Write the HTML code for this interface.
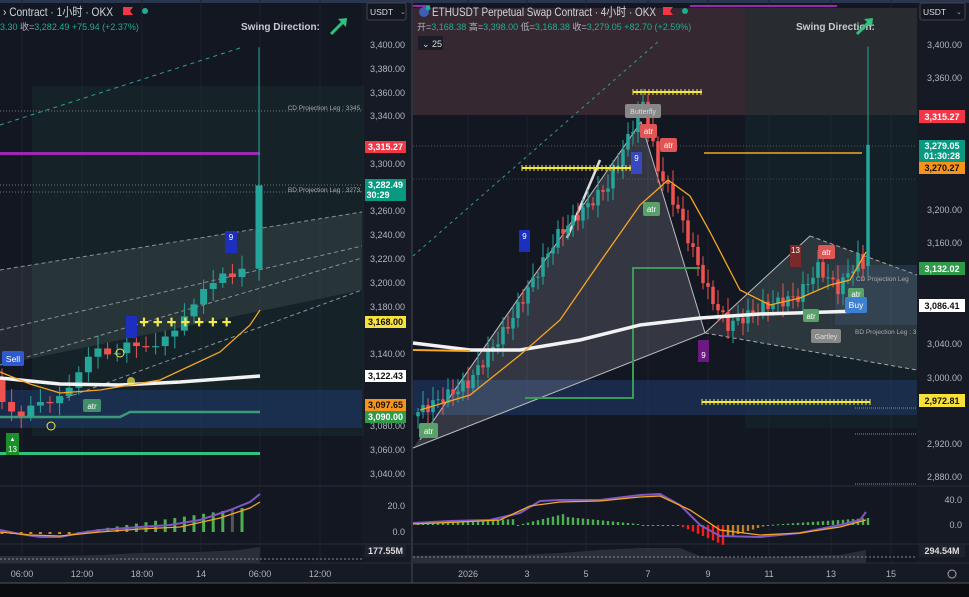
<!DOCTYPE html>
<html><head><meta charset="utf-8">
<style>
html,body{margin:0;padding:0;background:#0b0c10;}
svg{display:block;font-family:"Liberation Sans","Noto Sans CJK SC",sans-serif;}
</style></head><body>
<svg id="s" width="969" height="597" viewBox="0 0 969 597" xmlns="http://www.w3.org/2000/svg">
<rect width="969" height="597" fill="#0b0c10"/>
<rect x="0" y="0" width="411" height="583" fill="#161a25"/>
<rect x="0" y="0" width="362" height="563" fill="#131722"/>
<rect x="413" y="0" width="556" height="583" fill="#161a25"/>
<rect x="413" y="0" width="504" height="563" fill="#131722"/>
<rect x="0" y="0" width="969" height="3" fill="#2a3550"/>
<line x1="412" y1="0" x2="412" y2="583" stroke="#3a3e4a" stroke-width="1.5"/>
<g stroke="#1e2230" stroke-width="1">
<line x1="22" y1="0" x2="22" y2="563"/><line x1="82" y1="0" x2="82" y2="563"/><line x1="142" y1="0" x2="142" y2="563"/><line x1="201" y1="0" x2="201" y2="563"/><line x1="260" y1="0" x2="260" y2="563"/><line x1="320" y1="0" x2="320" y2="563"/>
<line x1="468" y1="0" x2="468" y2="563"/><line x1="527" y1="0" x2="527" y2="563"/><line x1="586" y1="0" x2="586" y2="563"/><line x1="648" y1="0" x2="648" y2="563"/><line x1="708" y1="0" x2="708" y2="563"/><line x1="769" y1="0" x2="769" y2="563"/><line x1="831" y1="0" x2="831" y2="563"/><line x1="891" y1="0" x2="891" y2="563"/>
</g>
<rect x="32" y="86" width="332" height="350" fill="#1b3a34" opacity="0.35"/>
<rect x="0" y="390" width="362" height="38" fill="#1f3a6b" opacity="0.55"/>
<polygon points="0,270 362,212 362,290 0,365" fill="#ffffff" opacity="0.08"/>
<g stroke="#8a8f9a" stroke-width="1" stroke-dasharray="4,3" fill="none">
<line x1="0" y1="270" x2="362" y2="212"/><line x1="0" y1="330" x2="362" y2="246"/><line x1="0" y1="365" x2="362" y2="258"/><line x1="60" y1="400" x2="362" y2="290"/>
</g>
<line x1="0" y1="125" x2="240" y2="48" stroke="#2aa38a" stroke-width="1" stroke-dasharray="4,4"/>
<line x1="0" y1="111" x2="362" y2="111" stroke="#777" stroke-dasharray="1,2"/>
<line x1="0" y1="185" x2="362" y2="185" stroke="#777" stroke-dasharray="1,2"/>
<line x1="0" y1="192" x2="362" y2="192" stroke="#777" stroke-dasharray="1,2"/>
<text x="362" y="110" font-size="6.5" fill="#aaa" text-anchor="end">CD Projection Leg : 3345.</text>
<text x="362" y="192" font-size="6.5" fill="#aaa" text-anchor="end">BD Projection Leg : 3273.</text>
<rect x="0" y="152" width="260" height="3" fill="#9c27b0"/>
<polyline points="0,417 120,417 130,412 260,412" stroke="#3a9a7a" stroke-width="2.5" fill="none"/>
<rect x="0" y="452" width="260" height="3" fill="#2ec27e"/>
<rect x="413" y="8" width="504" height="107" fill="#3a2a33" opacity="0.9"/>
<rect x="745" y="8" width="172" height="420" fill="#16302f" opacity="0.4"/>
<rect x="413" y="380" width="504" height="35" fill="#1f3a6b" opacity="0.55"/>
<line x1="690" y1="6" x2="837" y2="6" stroke="#9c27b0" stroke-width="2"/>
<line x1="413" y1="6" x2="430" y2="6" stroke="#9c27b0" stroke-width="2"/>
<line x1="413" y1="146" x2="917" y2="146" stroke="#555" stroke-dasharray="1,2"/>
<line x1="413" y1="179" x2="917" y2="179" stroke="#444" stroke-dasharray="1,2"/>
<line x1="413" y1="256" x2="660" y2="40" stroke="#2aa38a" stroke-dasharray="3,4"/>
<polygon points="413,448 641,122 705,333" fill="#ffffff" opacity="0.14"/>
<polyline points="420,440 641,122 705,333 413,448" stroke="#bbb" fill="none" stroke-width="1"/>
<polygon points="705,333 810,236 917,275 917,370" fill="#ffffff" opacity="0.10"/>
<polyline points="705,333 810,236" stroke="#bbb" fill="none"/>
<g stroke="#aaa" stroke-dasharray="4,3" fill="none"><line x1="810" y1="236" x2="917" y2="275"/><line x1="705" y1="333" x2="917" y2="370"/></g>
<rect x="835" y="265" width="82" height="60" fill="#5577aa" opacity="0.2"/>
<line x1="567" y1="238" x2="600" y2="160" stroke="#ddd" stroke-width="2.5"/>
<polyline points="525,398 633,398 633,268 700,268" stroke="#3a9a5a" stroke-width="2" fill="none"/>
<line x1="704" y1="153" x2="862" y2="153" stroke="#f5a623" stroke-width="1.5"/>
<line x1="855" y1="408" x2="917" y2="408" stroke="#888" stroke-dasharray="1,1"/>
<line x1="855" y1="434" x2="917" y2="434" stroke="#888" stroke-dasharray="1,1"/>
<line x1="855" y1="484" x2="917" y2="484" stroke="#888" stroke-dasharray="1,1"/>
<g id="cand"></g>
<polyline points="0,378 60,384 120,385 180,382 260,376" stroke="#f2f2f2" stroke-width="3.5" fill="none"/>
<polyline points="0,372 30,384 60,393 100,390 160,380 220,352 250,325 260,310" stroke="#f5a623" stroke-width="1.3" fill="none"/>
<polyline points="413,343 470,350 520,350 580,340 640,325 700,318 760,314 860,311" stroke="#f2f2f2" stroke-width="3.5" fill="none"/>
<polyline points="413,350 470,351" stroke="#f5a623" stroke-width="2" fill="none"/>
<polyline points="420,410 470,395 520,355 560,320 600,262 640,205 668,180 690,196 710,232 740,290 770,305 800,298 830,285 850,280 866,252" stroke="#f5a623" stroke-width="1.3" fill="none"/>
<g fill="#f4e94a" font-size="10" font-weight="bold">
<text x="139" y="326" letter-spacing="0.5">✚ ✚ ✚ ✚ ✚ ✚ ✚</text>
</g>
<g stroke="#f4e94a" stroke-width="2"><line x1="522" y1="168" x2="640" y2="168"/><line x1="633" y1="92" x2="702" y2="92"/><line x1="702" y1="402" x2="870" y2="402"/></g>
<g stroke="#f4e94a" stroke-width="1" id="ticks"></g>
<rect x="2" y="351" width="22" height="15" rx="2" fill="#2f5bd0"/><text x="13" y="362" font-size="8.5" fill="#fff" text-anchor="middle">Sell</text>
<rect x="6" y="433" width="13" height="22" fill="#1a8f2a"/><text x="12.5" y="452" font-size="8" fill="#fff" text-anchor="middle">13</text><text x="12.5" y="441" font-size="6" fill="#fff" text-anchor="middle">▲</text>
<rect x="83" y="399" width="18" height="13" rx="2" fill="#3e8f6a"/><text x="92" y="409" font-size="8" fill="#fff" text-anchor="middle">atr</text>
<rect x="225" y="231" width="12" height="22" fill="#1d2fbf"/><text x="231" y="240" font-size="8" fill="#fff" text-anchor="middle">9</text>
<rect x="126" y="316" width="11" height="22" fill="#1d2fbf"/>
<circle cx="120" cy="353" r="4" fill="none" stroke="#f4e94a"/><circle cx="131" cy="381" r="4" fill="#f4e94a" opacity="0.7"/><circle cx="51" cy="426" r="4" fill="none" stroke="#f4e94a"/>
<rect x="519" y="230" width="11" height="22" fill="#1d2fbf"/><text x="524.5" y="239" font-size="8" fill="#fff" text-anchor="middle">9</text>
<rect x="631" y="152" width="11" height="22" fill="#3a48c0"/><text x="636.5" y="161" font-size="8" fill="#fff" text-anchor="middle">9</text>
<rect x="625" y="104" width="36" height="14" rx="2" fill="#888"/><text x="643" y="114" font-size="7" fill="#ddd" text-anchor="middle">Butterfly</text>
<rect x="640" y="124" width="17" height="14" rx="2" fill="#e05555"/><text x="648.5" y="134" font-size="8" fill="#fff" text-anchor="middle">atr</text>
<rect x="660" y="138" width="17" height="14" rx="2" fill="#e05555"/><text x="668.5" y="148" font-size="8" fill="#fff" text-anchor="middle">atr</text>
<rect x="643" y="202" width="17" height="14" rx="2" fill="#5aa06a"/><text x="651.5" y="212" font-size="8" fill="#fff" text-anchor="middle">atr</text>
<rect x="419" y="423" width="19" height="15" rx="2" fill="#5aa06a"/><text x="428.5" y="434" font-size="8" fill="#fff" text-anchor="middle">atr</text>
<rect x="698" y="340" width="11" height="22" fill="#6a1a80"/><text x="703.5" y="358" font-size="8" fill="#fff" text-anchor="middle">9</text>
<rect x="790" y="245" width="11" height="22" fill="#7a2a2a"/><text x="795.5" y="253" font-size="8" fill="#fff" text-anchor="middle">13</text>
<rect x="818" y="245" width="17" height="14" rx="2" fill="#e05555"/><text x="826.5" y="255" font-size="8" fill="#fff" text-anchor="middle">atr</text>
<rect x="848" y="288" width="16" height="12" rx="2" fill="#5aa06a"/><text x="856" y="297" font-size="8" fill="#fff" text-anchor="middle">atr</text>
<rect x="803" y="309" width="16" height="13" rx="2" fill="#5aa06a"/><text x="811" y="319" font-size="8" fill="#fff" text-anchor="middle">atr</text>
<rect x="845" y="297" width="22" height="16" rx="2" fill="#3d7fd0"/><text x="856" y="308" font-size="8.5" fill="#fff" text-anchor="middle">Buy</text>
<rect x="811" y="329" width="30" height="14" rx="2" fill="#888"/><text x="826" y="339" font-size="7" fill="#ddd" text-anchor="middle">Gartley</text>
<text x="856" y="281" font-size="6.5" fill="#aaa">CD Projection Leg</text>
<text x="855" y="334" font-size="6.5" fill="#aaa">BD Projection Leg : 3</text>
<text x="3" y="16" font-size="12" fill="#d1d4dc" textLength="110" lengthAdjust="spacingAndGlyphs">› Contract · 1小时 · OKX</text>
<path d="M123 7h10l-3 4 3 4h-10z" fill="#f23645"/><circle cx="145" cy="11" r="3" fill="#22ab94"/>
<text x="0" y="30" font-size="9" fill="#22ab94"><tspan>3.30 </tspan><tspan fill="#b2b5be">收=</tspan>3,282.49 +75.94 (+2.37%)</text>
<text x="241" y="30" font-size="10" font-weight="bold" fill="#c9cbd1">Swing Direction:</text>
<path d="M331 34l13-13" stroke="#2ec27e" stroke-width="3"/><path d="M347 18l-9 1 8 8z" fill="#2ec27e"/>
<rect x="367" y="3" width="39" height="17" rx="2" fill="#131722" stroke="#444"/><text x="370" y="15" font-size="8.5" fill="#ddd">USDT</text><text x="400" y="14" font-size="7" fill="#aaa">⌄</text>
<circle cx="424" cy="12" r="5" fill="#3e5fb5"/><circle cx="428" cy="8" r="2.5" fill="#22ab94"/>
<text x="432" y="16" font-size="12" fill="#d1d4dc" textLength="224" lengthAdjust="spacingAndGlyphs">ETHUSDT Perpetual Swap Contract · 4小时 · OKX</text>
<path d="M663 7h10l-3 4 3 4h-10z" fill="#f23645"/><circle cx="685" cy="11" r="3" fill="#22ab94"/>
<text x="417" y="30" font-size="9" fill="#b2b5be">开=<tspan fill="#22ab94">3,168.38 </tspan>高=<tspan fill="#22ab94">3,398.00 </tspan>低=<tspan fill="#22ab94">3,168.38 </tspan>收=<tspan fill="#22ab94">3,279.05 +82.70 (+2.59%)</tspan></text>
<rect x="418" y="36" width="25" height="14" fill="#1a1d26"/><text x="422" y="47" font-size="9" fill="#ddd">⌄ 25</text>
<text x="796" y="30" font-size="10" font-weight="bold" fill="#c9cbd1">Swing Direction:</text>
<path d="M857 34l13-13" stroke="#2ec27e" stroke-width="3"/><path d="M873 18l-9 1 8 8z" fill="#2ec27e"/>
<rect x="920" y="3" width="45" height="17" rx="2" fill="#131722" stroke="#444"/><text x="923" y="15" font-size="8.5" fill="#ddd">USDT</text><text x="956" y="14" font-size="7" fill="#aaa">⌄</text>
<g font-size="9" fill="#b2b5be" text-anchor="end">
<text x="405" y="48">3,400.00</text><text x="405" y="72">3,380.00</text><text x="405" y="96">3,360.00</text><text x="405" y="119">3,340.00</text><text x="405" y="167">3,300.00</text><text x="405" y="214">3,260.00</text><text x="405" y="238">3,240.00</text><text x="405" y="262">3,220.00</text><text x="405" y="286">3,200.00</text><text x="405" y="310">3,180.00</text><text x="405" y="357">3,140.00</text><text x="405" y="429">3,080.00</text><text x="405" y="453">3,060.00</text><text x="405" y="477">3,040.00</text>
<text x="405" y="509">20.0</text><text x="405" y="535">0.0</text>
<text x="962" y="48">3,400.00</text><text x="962" y="81">3,360.00</text><text x="962" y="213">3,200.00</text><text x="962" y="246">3,160.00</text><text x="962" y="347">3,040.00</text><text x="962" y="381">3,000.00</text><text x="962" y="447">2,920.00</text><text x="962" y="480">2,880.00</text>
<text x="962" y="503">40.0</text><text x="962" y="528">0.0</text>
</g>
<g font-size="9" font-weight="bold" text-anchor="middle">
<rect x="365" y="141" width="41" height="12" fill="#f23645"/><text x="385.5" y="150" fill="#fff">3,315.27</text>
<rect x="365" y="179" width="41" height="22" fill="#089981"/><text x="385.5" y="188" fill="#fff">3,282.49</text><text x="378" y="198" fill="#fff">30:29</text>
<rect x="365" y="316" width="41" height="12" fill="#f7e13a"/><text x="385.5" y="325" fill="#111">3,168.00</text>
<rect x="365" y="370" width="41" height="12" fill="#fff"/><text x="385.5" y="379" fill="#111">3,122.43</text>
<rect x="365" y="399" width="41" height="12" fill="#f7931a"/><text x="385.5" y="408" fill="#111">3,097.65</text>
<rect x="365" y="411" width="41" height="12" fill="#2e9a4a"/><text x="385.5" y="420" fill="#fff">3,090.00</text>
<rect x="365" y="545" width="41" height="12" fill="#1e222d"/><text x="385.5" y="554" fill="#ddd">177.55M</text>
<rect x="919" y="110" width="46" height="13" fill="#f23645"/><text x="942" y="120" fill="#fff">3,315.27</text>
<rect x="919" y="140" width="46" height="22" fill="#089981"/><text x="942" y="149" fill="#fff">3,279.05</text><text x="942" y="159" fill="#fff">01:30:28</text>
<rect x="919" y="162" width="46" height="12" fill="#f7931a"/><text x="942" y="171" fill="#111">3,270.27</text>
<rect x="919" y="262" width="46" height="13" fill="#2e9a4a"/><text x="942" y="272" fill="#fff">3,132.02</text>
<rect x="919" y="299" width="46" height="13" fill="#fff"/><text x="942" y="309" fill="#111">3,086.41</text>
<rect x="919" y="394" width="46" height="13" fill="#f7e13a"/><text x="942" y="404" fill="#111">2,972.81</text>
<rect x="919" y="545" width="46" height="12" fill="#1e222d"/><text x="942" y="554" fill="#ddd">294.54M</text>
</g>
<line x1="0" y1="486" x2="411" y2="486" stroke="#2a2e39"/><line x1="413" y1="486" x2="969" y2="486" stroke="#2a2e39"/>
<line x1="0" y1="544" x2="411" y2="544" stroke="#2a2e39"/><line x1="413" y1="544" x2="969" y2="544" stroke="#2a2e39"/>
<line x1="0" y1="563" x2="411" y2="563" stroke="#2a2e39"/><line x1="413" y1="563" x2="969" y2="563" stroke="#2a2e39"/>
<g id="macd"></g>
<polyline points="0,556 60,556 100,555 140,553 200,552 240,550 260,547 260,563 0,563" fill="#2a2e39"/>
<polyline points="413,556 460,555 520,555 560,553 600,550 640,548 680,548 700,556 740,558 800,556 840,555 866,550 866,563 413,563" fill="#2a2e39"/>
<line x1="0" y1="559" x2="362" y2="559" stroke="#888" stroke-dasharray="2,2"/>
<line x1="413" y1="557" x2="917" y2="557" stroke="#888" stroke-dasharray="2,2"/>
<polyline points="0,530 20,534 40,537 60,537 80,533 100,530 140,527 170,525 200,520 230,510 250,502 260,494" stroke="#7e57c2" stroke-width="2" fill="none"/>
<polyline points="0,532 30,535 60,536 100,532 140,529 180,527 220,518 250,508 260,502" stroke="#f5a623" stroke-width="1.3" fill="none"/>
<polyline points="413,523 450,521 490,520 520,513 540,501 560,500 600,500 640,495 660,494 680,505 700,525 720,536 760,537 800,533 840,525 860,520 866,512" stroke="#7e57c2" stroke-width="2" fill="none"/>
<polyline points="413,524 460,522 500,520 530,506 560,502 600,501 640,497 660,496 690,510 720,530 760,535 800,533 840,527 866,520" stroke="#f5a623" stroke-width="1.3" fill="none"/>
<g font-size="9" fill="#b2b5be" text-anchor="middle">
<text x="22" y="577">06:00</text><text x="82" y="577">12:00</text><text x="142" y="577">18:00</text><text x="201" y="577">14</text><text x="260" y="577">06:00</text><text x="320" y="577">12:00</text>
<text x="468" y="577">2026</text><text x="527" y="577">3</text><text x="586" y="577">5</text><text x="648" y="577">7</text><text x="708" y="577">9</text><text x="769" y="577">11</text><text x="831" y="577">13</text><text x="891" y="577">15</text>
</g>
<circle cx="952" cy="574" r="4" fill="none" stroke="#aaa"/>
<line x1="0" y1="583" x2="969" y2="583" stroke="#555"/>
</svg>
<script>
var NS="http://www.w3.org/2000/svg",g=document.getElementById("cand"),m=document.getElementById("macd"),tk=document.getElementById("ticks");
function el(p,t,a){var e=document.createElementNS(NS,t);for(var k in a)e.setAttribute(k,a[k]);p.appendChild(e);return e;}
var G="#26a69a",R="#ef5350";
function candle(x,o,c,h,l,w,up){var col=up?G:R;el(g,"line",{x1:x,x2:x,y1:h,y2:l,stroke:col,"stroke-width":1});var t=Math.min(o,c),b=Math.max(o,c);el(g,"rect",{x:x-w/2,y:t,width:w,height:Math.max(1,b-t),fill:col});}
var lc=[3120,3100,3092,3088,3097,3100,3099,3105,3112,3125,3138,3145,3140,3141,3150,3147,3146,3147,3155,3160,3172,3182,3195,3200,3208,3205,3212,3282];
function ly(p){return 45+(3400-p)*1.19;}
for(var i=1;i<lc.length;i++){var x=2+9.6*(i-1);if(i==lc.length-1)x=259;var o=lc[i-1],c=lc[i];var h=Math.max(o,c)+5+(i%3)*3,l=Math.min(o,c)-4-(i%4)*2;if(i==lc.length-1)h=3398;candle(x,ly(o),ly(c),ly(h),ly(l),7,c>=o);}
var kp=[[0,2955],[10,2990],[18,3060],[28,3170],[38,3230],[45,3330],[48,3250],[52,3200],[58,3100],[62,3060],[70,3085],[76,3095],[80,3130],[84,3105],[88,3140],[89,3132],[90,3279]];
function ry(p){return 45+(3400-p)*0.825;}
function val(i){for(var k=0;k<kp.length-1;k++){if(i>=kp[k][0]&&i<=kp[k+1][0]){var t=(i-kp[k][0])/(kp[k+1][0]-kp[k][0]);return kp[k][1]+t*(kp[k+1][1]-kp[k][1]);}}return 3279;}
var prev=2950;
for(var i=0;i<=90;i++){var x=418+i*5.0;var c=val(i)+(i<90?Math.sin(i*2.3)*7:0);var o=prev;if(i==90)o=3132;var h=Math.max(o,c)+5+Math.abs(Math.sin(i*1.7))*12,l=Math.min(o,c)-5-Math.abs(Math.cos(i*1.3))*10;if(i==90)h=3398;candle(x,ry(o),ry(c),ry(h),ry(l),3.5,c>=o);prev=c;}
[[522,640,168],[633,702,92],[702,870,402]].forEach(function(a){for(var x=a[0];x<=a[1];x+=4)el(tk,"line",{x1:x,x2:x,y1:a[2]-3,y2:a[2]+3});});
for(var i=0;i<26;i++){var x=2+9.6*i,v=i<8?-2:(i-8)*1.4;var col=v>=0?"#4caf50":"#d08a20";if(i==24)col="#555";if(i==25){v=24;col="#4caf50";}el(m,"rect",{x:x-1.5,y:v>=0?532-v:532,width:3,height:Math.max(1,Math.abs(v)),fill:col});}
for(var i=0;i<=90;i++){var x=418+i*5,v;if(i<20)v=2+i*0.2;else if(i<30)v=(i-20)*1.2;else if(i<45)v=8-(i-30)*0.5;else if(i<52)v=0;else if(i<62)v=-(i-52)*2.2;else if(i<70)v=-(70-i)*1.5;else v=(i-70)*0.35;var col=v>=0?"#4caf50":(i<62?"#ff1a1a":"#c08020");el(m,"rect",{x:x-1.2,y:v>=0?525-v:525,width:2.4,height:Math.max(1,Math.abs(v)),fill:col});}
</script>
</body></html>
